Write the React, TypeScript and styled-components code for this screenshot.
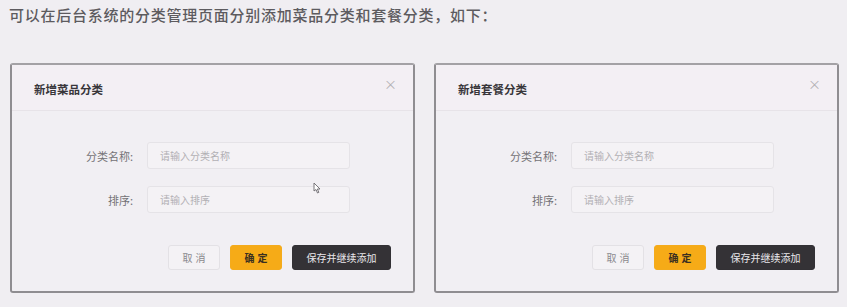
import React from 'react'
import styled, { createGlobalStyle } from 'styled-components'

const GlobalStyle = createGlobalStyle`
  html, body {
    margin: 0;
    padding: 0;
    background: #f0eef2;
  }
  body {
    font-family: 'Noto Sans CJK SC', 'Noto Sans', sans-serif;
  }
`

const Page = styled.div`
  width: 847px;
  height: 307px;
  background: #f0eef2;
  box-sizing: border-box;
  padding: 6px 0 0 10px;
  overflow: hidden;
`

const Caption = styled.p`
  margin: 0 0 0 -1px;
  font-size: 15px;
  line-height: 18px;
  letter-spacing: 0.75px;
  color: #5d5b5f;
  font-weight: 500;
`

const Row = styled.div`
  display: flex;
  gap: 19px;
  margin-top: 39px;
`

const Dialog = styled.div`
  position: relative;
  width: 405px;
  height: 230px;
  box-sizing: border-box;
  border: 2px solid #8f8d91;
  border-top-color: #a3a1a5;
  border-radius: 3px;
  background: #f1eff3;
  display: flex;
  flex-direction: column;
`

const Header = styled.div`
  height: 45px;
  flex-shrink: 0;
  display: flex;
  align-items: center;
  justify-content: space-between;
  padding: 0 16px 0 22px;
  background: #f3eff4;
  border-bottom: 1px solid #e7e3e8;
`

const Title = styled.span`
  font-size: 11.5px;
  font-weight: 700;
  color: #38363a;
  margin-top: 3px;
`

const Close = styled.span`
  font-size: 13px;
  color: #b3b1b5;
  line-height: 1;
  margin-top: -8px;
`

const Body = styled.div`
  padding: 31px 22px 0 0;
  display: flex;
  flex-direction: column;
  gap: 17px;
`

const Field = styled.div`
  display: flex;
  align-items: center;
  gap: 14px;
`

const Label = styled.label`
  width: 121px;
  text-align: right;
  font-size: 11px;
  color: #747276;
`

const Input = styled.div`
  width: 203px;
  height: 27px;
  box-sizing: border-box;
  border: 1px solid #e5e3e7;
  border-radius: 3px;
  background: #f4f2f5;
  padding-left: 12px;
  display: flex;
  align-items: center;
  font-size: 10px;
  color: #b2b0b4;
`

const Footer = styled.div`
  display: flex;
  justify-content: flex-end;
  gap: 10px;
  padding: 0 22px 0 0;
  margin-top: 32px;
`

const Button = styled.div<{ $kind: 'plain' | 'primary' | 'dark' }>`
  height: 25px;
  box-sizing: border-box;
  width: ${p => (p.$kind === 'dark' ? '99px' : '52px')};
  border-radius: 3px;
  display: flex;
  align-items: center;
  justify-content: center;
  white-space: nowrap;
  font-size: 10px;
  letter-spacing: ${p => (p.$kind === 'dark' ? '0' : '3px')};
  text-indent: ${p => (p.$kind === 'dark' ? '0' : '3px')};
  border: 1px solid
    ${p => (p.$kind === 'plain' ? '#e3e1e5' : p.$kind === 'primary' ? '#f4ab1c' : '#333135')};
  background: ${p =>
    p.$kind === 'plain' ? '#f4f2f5' : p.$kind === 'primary' ? '#f6ab17' : '#343236'};
  color: ${p => (p.$kind === 'plain' ? '#8b898d' : p.$kind === 'primary' ? '#3a2f20' : '#e9e7eb')};
  font-weight: ${p => (p.$kind === 'primary' ? 700 : 400)};
`

const Cursor = styled.svg`
  position: absolute;
  left: 301px;
  top: 117px;
`

type DialogProps = { title: string; cursor?: boolean }

const CategoryDialog = ({ title, cursor }: DialogProps) => (
  <Dialog>
    <Header>
      <Title>{title}</Title>
      <Close>×</Close>
    </Header>
    <Body>
      <Field>
        <Label>分类名称:</Label>
        <Input>请输入分类名称</Input>
      </Field>
      <Field>
        <Label>排序:</Label>
        <Input>请输入排序</Input>
      </Field>
    </Body>
    <Footer>
      <Button $kind="plain">取消</Button>
      <Button $kind="primary">确定</Button>
      <Button $kind="dark">保存并继续添加</Button>
    </Footer>
    {cursor && (
      <Cursor width="8" height="12" viewBox="0 0 8 12">
        <path d="M1 1 L1 9 L3 7.5 L4.5 11 L5.8 10.4 L4.4 7 L7 7 Z" fill="#fff" stroke="#6a686c" strokeWidth="0.9" />
      </Cursor>
    )}
  </Dialog>
)

const App = () => {
  return (
    <Page>
      <GlobalStyle />
      <Caption>可以在后台系统的分类管理页面分别添加菜品分类和套餐分类，如下：</Caption>
      <Row>
        <CategoryDialog title="新增菜品分类" cursor />
        <CategoryDialog title="新增套餐分类" />
      </Row>
    </Page>
  )
}

export default App
